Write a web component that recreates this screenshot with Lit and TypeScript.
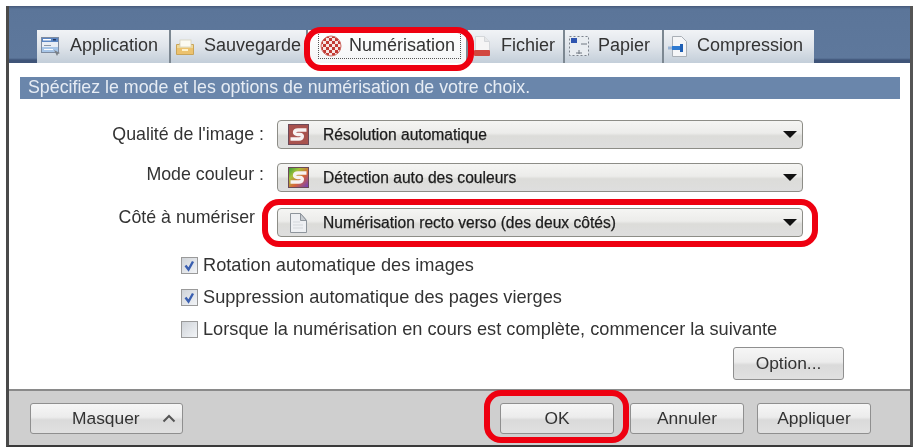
import { LitElement, html, css, svg } from "lit";
import { customElement } from "lit/decorators.js";

const iApp = html`<svg width="22" height="22" viewBox="0 0 22 22"><rect x="1.500" y="2.500" width="17" height="15" fill="#e9eef5" stroke="#7d8ba0"/><rect x="2" y="3" width="16" height="4" fill="#5b86c4"/><rect x="3" y="4" width="8" height="1.500" fill="#fff"/><rect x="13" y="4" width="3" height="1.500" fill="#24365c"/><rect x="2" y="12" width="16" height="5" fill="#a8c6e8"/><rect x="4" y="10" width="7" height="1" fill="#8a97a8"/><rect x="4" y="14" width="9" height="1" fill="#f8fbff"/><path d="M14 15l6 3-2 1-1 2z" fill="#7a8087"/></svg>`;
const iFolder = html`<svg width="22" height="22" viewBox="0 0 22 22"><path d="M2.500 19.500V9.500h3l1-2h10v2h3v10z" fill="#f0d998" stroke="#c9a458"/><rect x="6" y="5" width="11" height="7" fill="#fcfbf2" stroke="#d6d2bc" stroke-width=".8"/><path d="M3 13h16v6H3z" fill="#ecc26e"/><rect x="8" y="14" width="6" height="2" fill="#fdf1cb"/></svg>`;
const checker = svg`<pattern id="chk" width="6" height="6" patternUnits="userSpaceOnUse"><rect width="6" height="6" fill="#f6e6e4"/><rect width="3" height="3" fill="#c23a34"/><rect x="3" y="3" width="3" height="3" fill="#c23a34"/></pattern>`;
const iScan = html`<svg width="22" height="22" viewBox="0 0 22 22"><defs>${checker}</defs><circle cx="11" cy="11" r="10" fill="url(#chk)" stroke="#cf6a64"/></svg>`;
const iFile = html`<svg width="22" height="24" viewBox="0 0 22 24"><path d="M4.500 2.500h9l5 5v9h-14z" fill="#f5f5f5" stroke="#d4d7da"/><path d="M13.500 2.500v5h5" fill="#e4e6e8" stroke="#d4d7da"/><rect x="3" y="16" width="16" height="6" rx="1" fill="#d2473f"/></svg>`;
const iPaper = html`<svg width="22" height="22" viewBox="0 0 22 22"><rect x="1.500" y="1.500" width="19" height="19" fill="#e9edf1" stroke="#7c838c" stroke-dasharray="2 2"/><rect x="3" y="3" width="6" height="5" fill="#2f55b0"/><path d="M13 9h6M11 15v4M8 18h6" stroke="#6f7680" fill="none"/></svg>`;
const iComp = html`<svg width="22" height="22" viewBox="0 0 22 22"><path d="M5.500 1.500h9l5 5v15h-14z" fill="#f5f6f8" stroke="#a9afb6"/><path d="M1 13h4" stroke="#9ab5d6" stroke-width="3"/><path d="M5 13h10" stroke="#2e7ad1" stroke-width="4"/><rect x="13" y="9" width="3" height="8" fill="#1f5fb4"/></svg>`;

const sLogo = (bg: string) => html`<svg width="21" height="21" viewBox="0 0 21 21" class="s">
  <defs><linearGradient id="rb" x1="0" y1="0" x2="1" y2="1"><stop offset="0" stop-color="#2f9a3c"/><stop offset=".3" stop-color="#a6c23a"/><stop offset=".6" stop-color="#d8643a"/><stop offset="1" stop-color="#6a3fc4"/></linearGradient></defs>
  <rect x=".5" y=".5" width="20" height="20" fill="${bg}" stroke="#6b4a58"/>
  <path d="M18.500 6H10C5.500 6 5.500 10.500 9.500 10.500h2.500C15.500 10.500 15 15 11 15H2.500" fill="none" stroke="#f7f2f2" stroke-width="3.400"/></svg>`;
const iDoc = html`<svg width="21" height="22" viewBox="0 0 21 22" class="s"><path d="M2.500 1.500h10l6 7v12h-16z" fill="#eef0f3" stroke="#8e959c"/><path d="M12.500 1.500l6 7h-6z" fill="#c9cdd2" stroke="#8e959c"/><path d="M5 10h7M5 13h10M5 16h10" stroke="#d3d7db"/></svg>`;

@customElement("app-root")
export class AppRoot extends LitElement {
  static styles = css`
    :host { display: block; width: 918px; height: 448px; box-sizing: border-box; padding: 6px 5px 1px 6px; background: #fff; font-family: "Liberation Sans", Arial, sans-serif; color: #333; position: relative; overflow: hidden; }
    .win { height: 100%; box-sizing: border-box; display: flex; flex-direction: column; border: 3px solid #3a3a3a; border-top: 0; border-left-color: #4a4a4a; border-right-color: #555; border-bottom-width: 2px; filter: blur(0.45px); }
    .head { height: 57px; box-sizing: border-box; background: linear-gradient(#46597a 0, #5b7599 3px, #5e789c 52px, #3f5478 54px, #3f5478 57px); padding: 24px 0 0 28px; display: flex; align-items: stretch; flex: none; }
    .tab { box-sizing: border-box; height: 33px; display: flex; align-items: center; gap: 8px; padding: 0 0 2px 3px; font-size: 18px; background: linear-gradient(#f1f3f6, #dfe4ea 50%, #c3ced9); color: #333; border-right: 2px solid #7c8791; flex: none; }
    .tab.last { border-right: 0; }
    .tab svg { flex: none; }
    .tab.on { background: linear-gradient(#fff, #f4f5f6); position: relative; }
    .focus { display: flex; align-items: center; gap: 7px; height: 27px; box-sizing: border-box; border: 1px dotted #555; padding: 0 5px 0 1px; margin-left: 7px; }
    .body { flex: 1; background: #fff; padding: 14px 10px 0 11px; min-height: 0; }
    .info { height: 22px; box-sizing: border-box; background: #6a86ab; color: #e6ecf4; font-size: 17.8px; line-height: 21px; padding-left: 8px; white-space: nowrap; }
    .form { display: grid; grid-template-columns: 257px 526px; column-gap: 0; row-gap: 14px; margin-top: 21px; align-items: center; }
    .lab { font-size: 17.8px; text-align: right; padding-right: 13px; white-space: nowrap; }
    .lab.second { padding-bottom: 6px; }
    .lab.third { padding-right: 22px; padding-bottom: 8px; }
    .sel { grid-column: 2; height: 29px; box-sizing: border-box; border: 1px solid #8d8d87; border-radius: 4px; background: linear-gradient(#f5f5f3, #ececea 45%, #dcdcd9 55%, #dedede); display: flex; align-items: center; padding: 0 4px 0 10px; gap: 14px; font-size: 15.6px; color: #1c1c1c; -webkit-text-stroke: 0.25px #1c1c1c; }
    .sel.third { margin-top: 2px; }
    .sel .t { flex: 1; white-space: nowrap; }
    .arrow { width: 0; height: 0; border-left: 7px solid transparent; border-right: 7px solid transparent; border-top: 7px solid #111; margin-right: 1px; }
    .checks { display: flex; flex-direction: column; gap: 14px; margin: 19px 0 0 161px; }
    .ck { display: flex; align-items: center; gap: 5px; height: 18px; font-size: 18.2px; white-space: nowrap; color: #333; }
    .box { width: 17px; height: 17px; box-sizing: border-box; border: 1px solid #9a9a9a; background: linear-gradient(135deg, #cfd3d8, #f2f4f7); flex: none; display: flex; }
    .optrow { display: flex; justify-content: flex-end; padding-right: 56px; margin-top: 9px; }
    .btn { box-sizing: border-box; border: 1px solid #8f8f8f; border-radius: 3px; background: linear-gradient(#f6f6f6, #ececec 45%, #dadada 55%, #e0e0e0); display: flex; align-items: center; justify-content: center; font-size: 17.4px; color: #333; flex: none; }
    .opt { width: 111px; height: 33px; }
    .foot { height: 56px; box-sizing: border-box; background: #cfcfcf; border-top: 2px solid #8a8a8a; padding: 12px 0 0 21px; display: flex; flex: none; align-items: flex-start; }
    .foot .btn { height: 31px; width: 114px; }
    .foot .m { width: 153px; justify-content: flex-start; padding-left: 41px; gap: 22px; margin-right: 317px; }
    .foot .a { margin-left: 16px; }
    .foot .b { margin-left: 13px; }
    .ring { position: absolute; box-sizing: border-box; border: 6px solid #ee0010; border-radius: 17px; pointer-events: none; }
    .r1 { left: 304px; top: 27px; width: 170px; height: 44px; }
    .r2 { left: 262px; top: 199px; width: 556px; height: 48px; }
    .r3 { left: 484px; top: 390px; width: 145px; height: 53px; }
  `;

  private tab(icon: unknown, label: string, w: number, extra = "") {
    return html`<div class="tab ${extra}" style="width:${w}px">${icon}<span>${label}</span></div>`;
  }

  private check(label: string, on: boolean) {
    return html`<div class="ck"><span class="box">${on
      ? html`<svg width="15" height="15" viewBox="0 0 15 15"><path d="M3.500 7.500l3 4 4.500-8" fill="none" stroke="#3a5fb0" stroke-width="2.400"/></svg>`
      : null}</span><span>${label}</span></div>`;
  }

  render() {
    return html`
      <div class="win">
        <div class="head">
          ${this.tab(iApp, "Application", 134)}
          ${this.tab(iFolder, "Sauvegarde", 137)}
          <div class="tab on" style="width:160px"><div class="focus">${iScan}<span>Numérisation</span></div></div>
          ${this.tab(iFile, "Fichier", 97)}
          ${this.tab(iPaper, "Papier", 99)}
          ${this.tab(iComp, "Compression", 150, "last")}
        </div>
        <div class="body">
          <div class="info">Spécifiez le mode et les options de numérisation de votre choix.</div>
          <div class="form">
            <div class="lab">Qualité de l'image :</div>
            <div class="sel">${sLogo("#a8524e")}<span class="t">Résolution automatique</span><span class="arrow"></span></div>
            <div class="lab second">Mode couleur :</div>
            <div class="sel">${sLogo("url(#rb)")}<span class="t">Détection auto des couleurs</span><span class="arrow"></span></div>
            <div class="lab third">Côté à numériser</div>
            <div class="sel third">${iDoc}<span class="t">Numérisation recto verso (des deux côtés)</span><span class="arrow"></span></div>
          </div>
          <div class="checks">
            ${this.check("Rotation automatique des images", true)}
            ${this.check("Suppression automatique des pages vierges", true)}
            ${this.check("Lorsque la numérisation en cours est complète, commencer la suivante", false)}
          </div>
          <div class="optrow"><div class="btn opt">Option...</div></div>
        </div>
        <div class="foot">
          <div class="btn m"><span>Masquer</span><svg width="14" height="9" viewBox="0 0 14 9"><path d="M1.500 7.500L7 2l5.500 5.500" fill="none" stroke="#555" stroke-width="2"/></svg></div>
          <div class="btn">OK</div>
          <div class="btn a">Annuler</div>
          <div class="btn b">Appliquer</div>
        </div>
      </div>
      <div class="ring r1"></div>
      <div class="ring r2"></div>
      <div class="ring r3"></div>
    `;
  }
}
